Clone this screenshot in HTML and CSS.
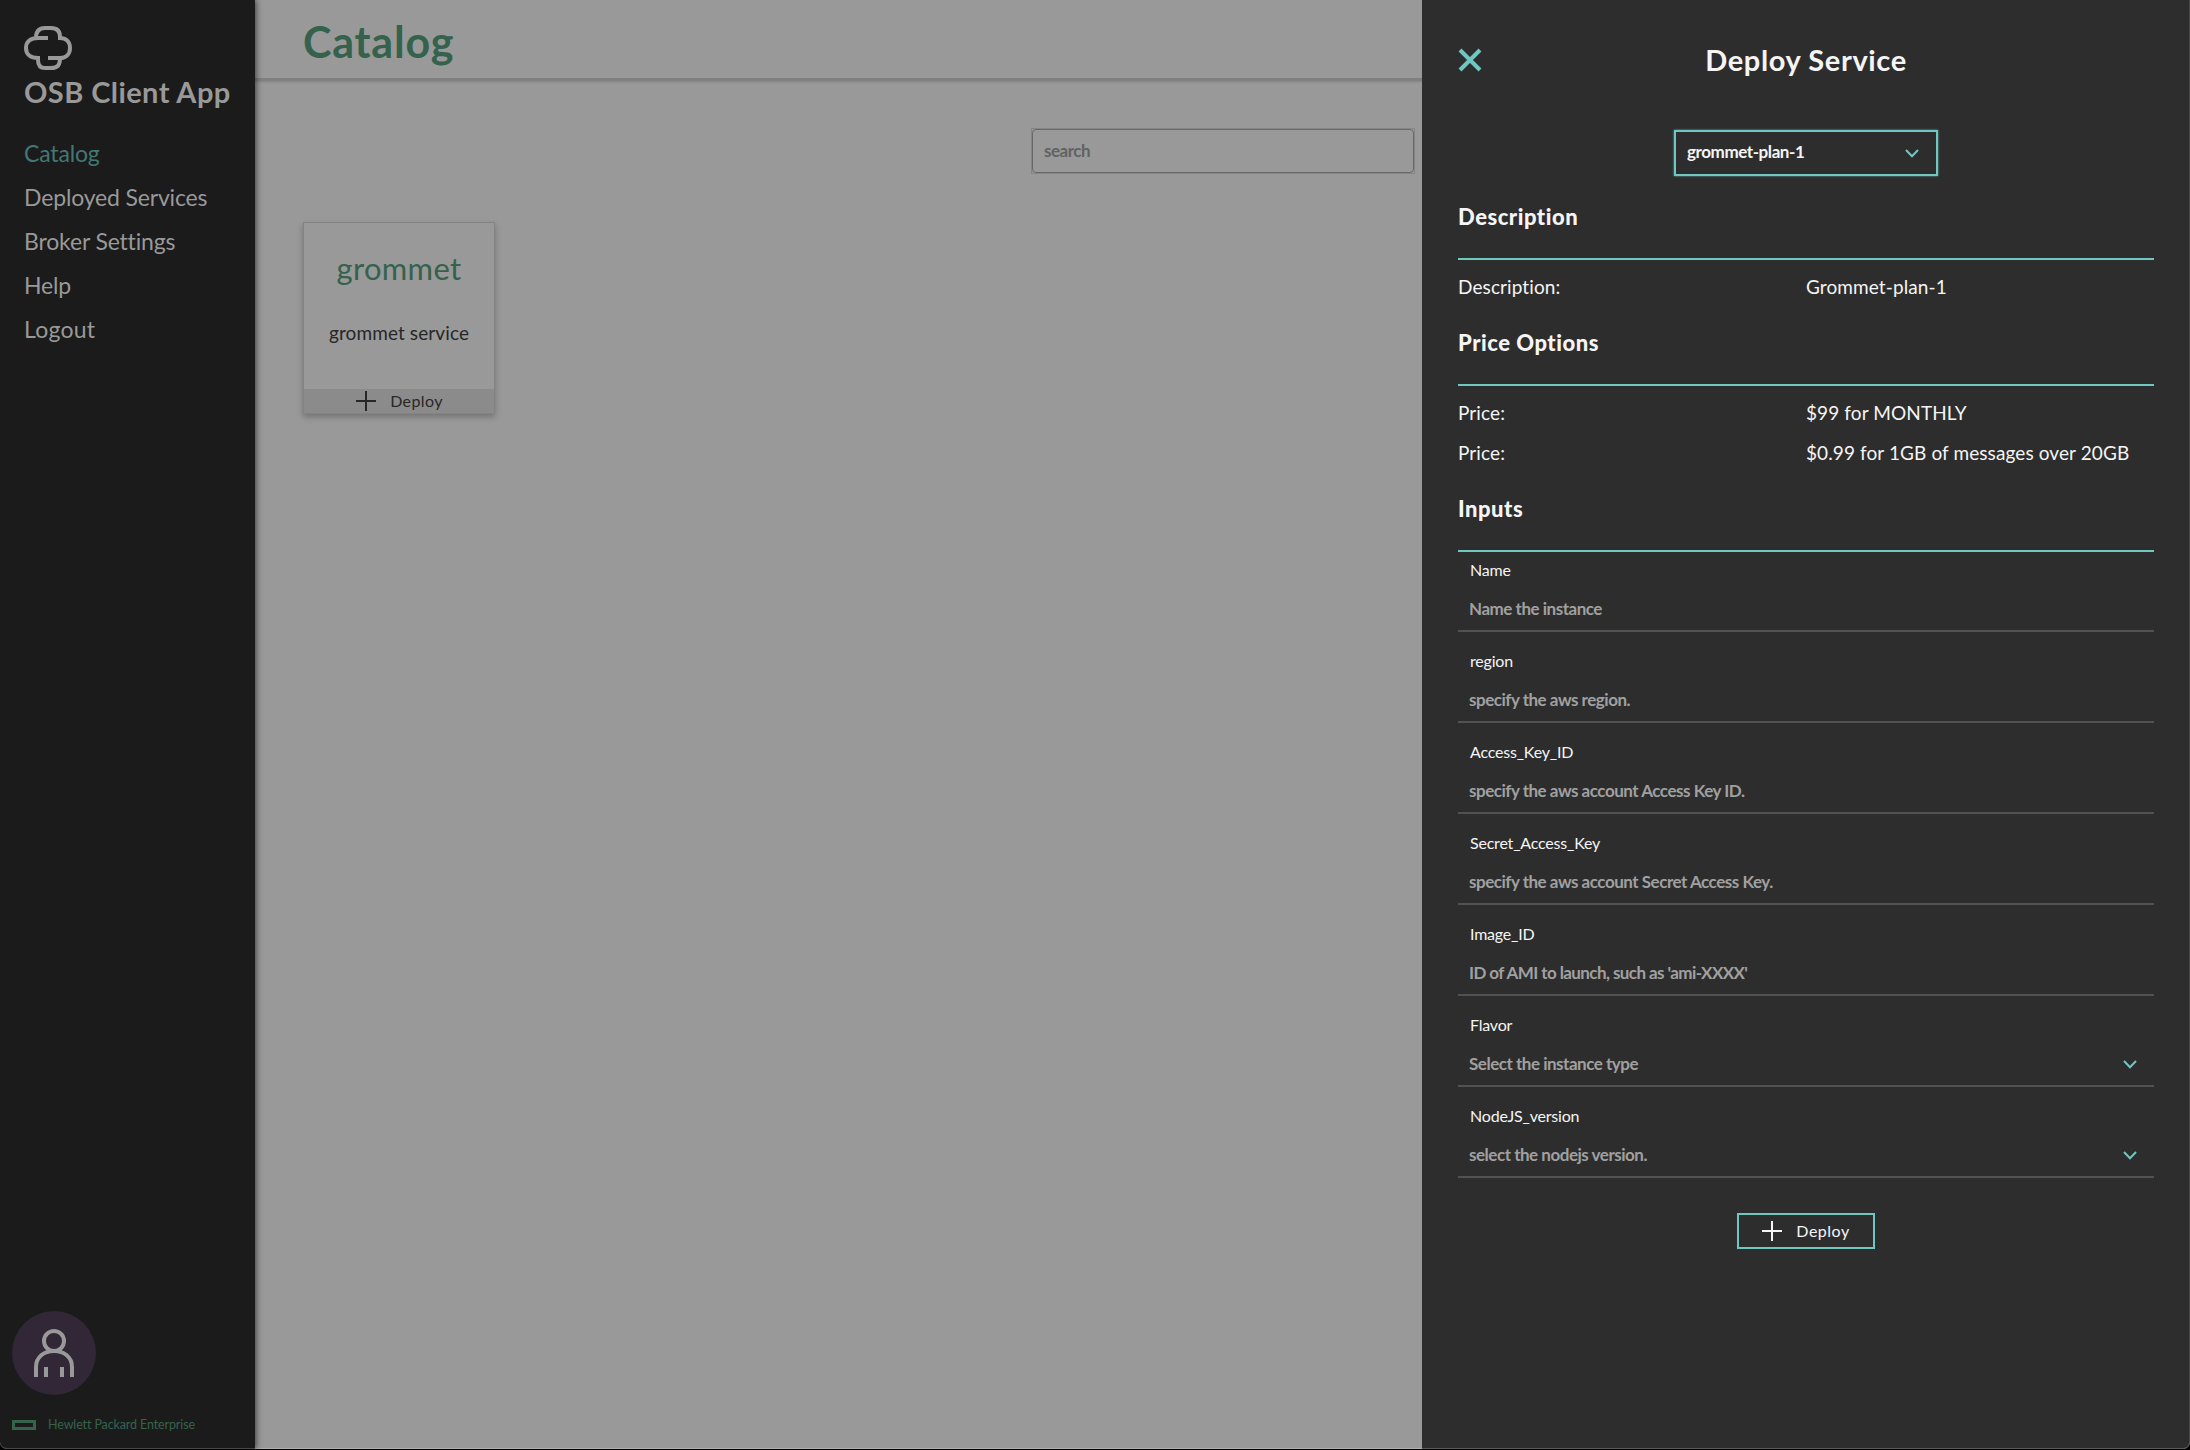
FILE: index.html
```
<!DOCTYPE html>
<html lang="en">
<head>
<meta charset="utf-8">
<title>OSB Client App</title>
<link rel="stylesheet" href="styles.css">
</head>
<body>
<div class="app">
  <aside class="sidebar">
    <svg class="logo" viewBox="0 0 48 44" width="48" height="44"><path d="M24 12H14C6 12 2 16 2 22S6 32 14 32V34C14 39 16 42 21 42H27C34 42 36 39 36 32H24M12 14V12C12 5 15 2 21 2H27C33 2 36 5 36 11V12C42 12 46 16 46 22S42 32 36 32"/></svg>
    <div class="brand">OSB Client App</div>
    <nav class="nav">
      <a class="nav-item active">Catalog</a>
      <a class="nav-item">Deployed Services</a>
      <a class="nav-item">Broker Settings</a>
      <a class="nav-item">Help</a>
      <a class="nav-item wide">Logout</a>
    </nav>
    <div class="avatar">
      <svg viewBox="0 0 40 48" width="40" height="48"><circle cx="20" cy="12" r="10"/><path d="M2 48V38C2 28 10 22 20 22S38 28 38 38V48M12 38V48M28 38V48"/></svg>
    </div>
    <div class="company"><span class="company-mark"></span><span>Hewlett Packard Enterprise</span></div>
  </aside>
  <main class="main">
    <header class="main-header"><h1 class="main-title">Catalog</h1></header>
    <div class="search"><div class="search-field">search</div></div>
    <article class="card">
      <h2 class="card-title">grommet</h2>
      <p class="card-text">grommet service</p>
      <div class="card-action">
        <svg class="plus" viewBox="0 0 20 20" width="20" height="20"><path d="M10 0V20M0 10H20"/></svg>
        <span>Deploy</span>
      </div>
    </article>
  </main>
  <section class="layer">
    <header class="layer-header">
      <svg class="close" viewBox="0 0 24 24" width="24" height="24"><path d="M2 2L22 22M22 2L2 22"/></svg>
      <h2 class="layer-title">Deploy Service</h2>
    </header>
    <div class="plan"><span>grommet-plan-1</span><svg class="chevron" viewBox="0 0 14 9" width="14" height="9"><path d="M1 1L7 7.3L13 1"/></svg></div>
    <h3 class="section-title">Description</h3>
    <dl class="rows">
      <div class="row"><dt>Description:</dt><dd>Grommet-plan-1</dd></div>
    </dl>
    <h3 class="section-title">Price Options</h3>
    <dl class="rows">
      <div class="row"><dt>Price:</dt><dd>$99 for MONTHLY</dd></div>
      <div class="row"><dt>Price:</dt><dd>$0.99 for 1GB of messages over 20GB</dd></div>
    </dl>
    <h3 class="section-title">Inputs</h3>
    <div class="fields">
      <div class="field"><div class="label">Name</div><div class="value">Name the instance</div></div>
      <div class="field"><div class="label">region</div><div class="value">specify the aws region.</div></div>
      <div class="field"><div class="label">Access_Key_ID</div><div class="value">specify the aws account Access Key ID.</div></div>
      <div class="field"><div class="label">Secret_Access_Key</div><div class="value">specify the aws account Secret Access Key.</div></div>
      <div class="field"><div class="label">Image_ID</div><div class="value tight">ID of AMI to launch, such as 'ami-XXXX'</div></div>
      <div class="field"><div class="label">Flavor</div><div class="value">Select the instance type<svg class="chevron" viewBox="0 0 14 9" width="14" height="9"><path d="M1 1L7 7.3L13 1"/></svg></div></div>
      <div class="field"><div class="label">NodeJS_version</div><div class="value">select the nodejs version.<svg class="chevron" viewBox="0 0 14 9" width="14" height="9"><path d="M1 1L7 7.3L13 1"/></svg></div></div>
    </div>
    <div class="deploy-button">
      <svg class="plus" viewBox="0 0 20 20" width="20" height="20"><path d="M10 0V20M0 10H20"/></svg>
      <span>Deploy</span>
    </div>
  </section>
</div>
</body>
</html>
```
FILE: styles.css
```
* { box-sizing: border-box; }
body { margin: 0; background: #000; font-family: Lato, "Liberation Sans", sans-serif; }
h1, h2, h3, p, dl, dd { margin: 0; }
svg { display: block; flex: none; fill: none; }

.app {
  display: flex;
  width: 2190px;
  height: 1449px;
  overflow: hidden;
  background: #999;
  border-radius: 0 0 7px 7px;
  box-shadow: 0 0 0 1px #000;
}

/* Sidebar */
.sidebar {
  display: flex;
  flex-direction: column;
  flex: none;
  width: 255px;
  padding: 26px 0 12px 24px;
  background: #1b1b1b;
  border-bottom: 1px solid #484848;
  border-radius: 0 0 0 7px;
  box-shadow: 1px 0 6px rgba(0, 0, 0, .6);
  color: #999;
  z-index: 1;
}
.logo { stroke: #999; stroke-width: 4; }
.brand { margin-top: 4px; font-size: 29px; font-weight: 700; line-height: 36px; letter-spacing: .42px; white-space: nowrap; }
.nav { margin-top: 21px; }
.nav-item { display: block; font-size: 23px; line-height: 44px; letter-spacing: -.16px; }
.nav-item.active { color: #437774; }
.nav-item.wide { letter-spacing: .25px; }
.avatar {
  display: flex;
  align-items: center;
  justify-content: center;
  width: 84px;
  height: 84px;
  margin: auto 0 0 -12px;
  border-radius: 50%;
  background: #312737;
}
.avatar svg { stroke: #999; stroke-width: 4; }
.company { display: flex; align-items: center; gap: 12px; margin: 17px 0 0 -12px; height: 24px; font-size: 12.5px; letter-spacing: -.12px; color: #35634c; }
.company-mark { width: 24px; height: 10px; margin-top: 2px; border: 3px solid #35634c; }

/* Catalog */
.main {
  flex: 1;
  border-bottom: 1px solid #b0b0b0;
}
.main-header { height: 81px; padding: 3px 48px 0; border-bottom: 3px solid #808080; box-shadow: 0 1px 2px rgba(0, 0, 0, .15); }
.main-title { font-size: 43px; line-height: 75px; padding-top: 1px; letter-spacing: .8px; color: #35624c; }
.search { width: 384px; height: 46px; margin: 47px 7px 0 auto; border: 1px solid #858585; }
.search-field { height: 44px; padding-left: 11px; border: 1px solid #686868; border-radius: 4px; font-size: 17px; font-weight: 700; line-height: 41px; letter-spacing: -.5px; color: #626262; }
.card {
  display: flex;
  flex-direction: column;
  width: 192px;
  height: 192px;
  margin: 48px 0 0 48px;
  border: 1px solid #838383;
  box-shadow: 0 3px 6px rgba(0, 0, 0, .25);
  text-align: center;
}
.card-title { margin-top: 26px; font-size: 31px; font-weight: 400; line-height: 38px; letter-spacing: .3px; color: #35624c; }
.card-text { margin-top: 34px; font-size: 19px; line-height: 24px; letter-spacing: .1px; color: #272727; }
.card-action {
  display: flex;
  align-items: center;
  justify-content: center;
  gap: 14px;
  height: 24px;
  margin-top: auto;
  padding-left: 1px;
  background: #8b8b8b;
  color: #272727;
  font-size: 16px;
  line-height: 24px;
  letter-spacing: .4px;
}
.plus { stroke: currentColor; stroke-width: 2; }

/* Deploy layer */
.layer {
  flex: none;
  width: 768px;
  padding: 42px 35px 0 36px;
  background: #2d2d2d;
  border-right: 1px solid #484848;
  border-bottom: 1px solid #5a5759;
  border-radius: 0 0 7px 0;
  color: #f5f5f5;
}
.layer-header { display: grid; grid-template-columns: 24px 1fr 24px; align-items: center; height: 36px; }
.close { stroke: #6fc7c1; stroke-width: 4; }
.layer-title { font-size: 29px; line-height: 36px; letter-spacing: .62px; text-align: center; }
.plan {
  display: flex;
  align-items: center;
  justify-content: space-between;
  width: 264px;
  height: 46px;
  margin: 52px auto 25px;
  padding: 0 17px 0 11px;
  border: 2px solid #6fc7c1;
  box-shadow: 0 0 2px 0 rgba(111, 199, 193, .8);
  font-size: 17px;
  font-weight: 700;
  line-height: 22px;
  letter-spacing: -.42px;
}
.plan span { margin-top: -2px; }
.chevron { stroke: #6fc7c1; stroke-width: 2; }
.section-title { padding-bottom: 25px; border-bottom: 2px solid #6fc7c1; font-size: 22px; font-weight: 900; line-height: 32px; letter-spacing: .52px; }
.rows { margin: 7px 0 20px; }
.row { display: grid; grid-template-columns: 1fr 1fr; font-size: 19px; line-height: 40px; letter-spacing: .1px; }
.field { padding: 17px 0 9px; border-bottom: 2px solid #525252; }
.field:first-child { padding-top: 6px; }
.label { padding-left: 12px; font-size: 16px; line-height: 24px; letter-spacing: -.2px; }
.value { display: flex; align-items: center; justify-content: space-between; margin-top: 15px; padding: 0 17px 0 11px; font-size: 17px; font-weight: 700; line-height: 24px; letter-spacing: -.48px; color: #a0a0a0; }
.value.tight { letter-spacing: -.58px; }
.deploy-button {
  display: flex;
  align-items: center;
  justify-content: center;
  gap: 14px;
  width: 138px;
  height: 36px;
  margin: 35px auto 0;
  border: 2px solid #6fc7c1;
  font-size: 16px;
  line-height: 32px;
  letter-spacing: .5px;
}
```
